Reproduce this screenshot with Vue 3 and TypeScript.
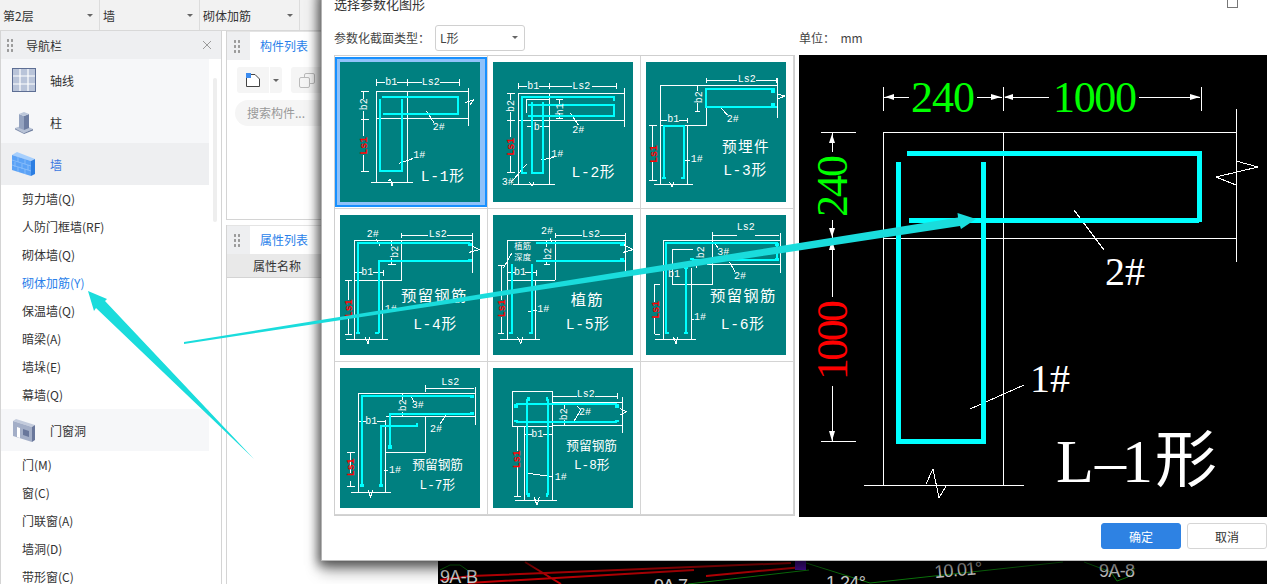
<template>
  <div class="page">
    <header class="topbar">
      <div v-for="name in floorSelects" :key="name" class="top-select">
        <span>{{ name }}</span>
        <i class="caret"></i>
      </div>
    </header>

    <div class="workspace">
      <aside class="nav-panel">
        <div class="panel-head">
          <i class="grip"></i>
          <span class="panel-title">导航栏</span>
          <svg class="close" viewBox="0 0 10 10" width="10" height="10">
            <path d="M1 1L9 9M9 1L1 9" stroke="#9a9a9a" stroke-width="1" fill="none" />
          </svg>
        </div>
        <div class="nav-body">
          <ul class="nav-list">
            <template v-for="group in navGroups" :key="group.name">
              <li class="nav-group" :class="{ 'is-open': group.name === '墙' }">
                <svg class="nav-icon" viewBox="0 0 24 24" width="24" height="24">
                  <template v-if="group.icon === 'grid'">
                    <rect x="0.5" y="0.5" width="23" height="23" fill="#b9c4d9" stroke="#5d6e94" />
                    <path d="M8 1V23M16 1V23M1 8H23M1 16H23" stroke="#fff" stroke-width="1.2" />
                  </template>
                  <template v-else-if="group.icon === 'column'">
                    <path d="M3 18L12 15L21 19L12 23Z" fill="#b7c2d6" />
                    <path d="M3 18L12 23V24L3 19.5Z" fill="#8795b2" />
                    <path d="M12 23L21 19V20.5L12 24Z" fill="#6f7e9f" />
                    <path d="M7 4L12 6V20L7 18Z" fill="#94a3c0" />
                    <path d="M12 6L17 4V18L12 20Z" fill="#6d7da1" />
                    <path d="M7 4L12 2L17 4L12 6Z" fill="#bcc7da" />
                  </template>
                  <template v-else-if="group.icon === 'wall'">
                    <path d="M0 3L5 0L23 7L19 9Z" fill="#a6cffd" />
                    <path d="M0 3L19 9V24L0 18Z" fill="#5ba2f6" />
                    <path d="M19 9L23 7V22L19 24Z" fill="#2c7ee2" />
                    <path d="M0 8L19 14M0 13L19 19M6 5V10M13 7V12M3 10V15M10 12V17M16 13V18M6 15V20M13 17V22" stroke="#8fc2fb" stroke-width="0.8" fill="none" />
                  </template>
                  <template v-else>
                    <path d="M1 3L4 1L23 7L20 9Z" fill="#c3cbdc" />
                    <path d="M1 3L20 9V24L1 18Z" fill="#a3aec7" />
                    <path d="M20 9L23 7V22L20 24Z" fill="#69779b" />
                    <path d="M5 9L8 10V20L5 19Z" fill="#fff" />
                    <path d="M11 11L17 13V19L11 17Z" fill="#69779b" />
                  </template>
                </svg>
                <span>{{ group.name }}</span>
              </li>
              <li
                v-for="item in group.items"
                :key="item"
                class="nav-item"
                :class="{ 'is-active': item === '砌体加筋(Y)' }"
              >
                {{ item }}
              </li>
            </template>
          </ul>
          <div class="nav-scroll"></div>
        </div>
      </aside>

      <section class="mid-panels">
        <div class="mid-panel list-panel">
          <div class="tab-head">
            <span class="tab-grip"><i class="grip"></i></span>
            <span class="tab">构件列表</span>
          </div>
          <div class="tool-row">
            <span class="tool-btn new-btn">
              <svg viewBox="0 0 16 16" width="16" height="16">
                <path d="M1.5 2.5H10L14.5 7V14.5H1.5Z" fill="#fff" stroke="#444" stroke-width="1" />
                <rect x="1" y="1" width="5" height="5" fill="#3c8cf0" />
              </svg>
            </span>
            <span class="tool-btn drop-btn"><i class="caret"></i></span>
            <span class="tool-btn copy-btn">
              <svg viewBox="0 0 16 16" width="16" height="16" fill="none" stroke="#bbb">
                <rect x="5.5" y="1.5" width="10" height="10" rx="1.5" />
                <rect x="0.5" y="5.5" width="10" height="10" rx="1.5" fill="#f5f5f5" />
              </svg>
            </span>
          </div>
          <div class="search-box">搜索构件...</div>
        </div>
        <div class="mid-panel prop-panel">
          <div class="tab-head">
            <span class="tab-grip"><i class="grip"></i></span>
            <span class="tab">属性列表</span>
          </div>
          <div class="prop-head">属性名称</div>
        </div>
      </section>

      <div class="scene">
        <svg class="scene-svg" viewBox="438 31 829 553" width="829" height="553">
          <rect x="438" y="31" width="829" height="553" fill="#000" />
          <path d="M440 580L471 576L791 563M468 583L694 570M706 576L803 567M525 562L561 584" stroke="#c40006" stroke-width="2" fill="none" />
          <path d="M688 584L809 570M803 562L870 583L1063 562M1084 562L1111 572L1117 581L1128 577L1135 568M440 570L450 565L460 565L470 572" stroke="#0d7a0d" stroke-width="1" fill="none" />
          <rect x="795" y="560" width="11" height="10" fill="#4b0f9e" />
          <text x="440" y="583" class="scene-text" textLength="38">9A-B</text>
          <text x="654" y="592" class="scene-text" textLength="34">9A-7</text>
          <text x="826" y="589" class="scene-text" textLength="40">1.24°</text>
          <text x="935" y="578" class="scene-text" textLength="48" transform="rotate(-5 935 578)">10.01°</text>
          <text x="1099" y="577" class="scene-text" textLength="36">9A-8</text>
        </svg>
      </div>
    </div>

    <div class="dialog">
      <div class="dialog-title">
        <span>选择参数化图形</span>
        <i class="max-icon"></i>
      </div>
      <div class="type-row">
        <div class="type-left">
          <label>参数化截面类型：</label>
          <div class="type-select">
            <span>L形</span>
            <i class="caret"></i>
          </div>
        </div>
        <span class="unit">单位： &nbsp;mm</span>
      </div>

      <div class="dialog-body">
        <div class="shape-grid">
          <div v-for="(shape, i) in shapes" :key="shape.name" class="shape-cell">
            <div class="shape-frame" :class="{ 'is-selected': i === 0 }">
              <svg class="shape" :viewBox="`${shape.ox} ${shape.oy} 420 420`" width="140" height="140">
                <rect :x="shape.ox" :y="shape.oy" width="420" height="420" fill="#008080" />
                <path :d="shape.white" class="thin" />
                <path :d="shape.cyan" class="bar" />
                <path v-if="shape.hooks" :d="shape.hooks" class="hook" />
                <text
                  v-for="label in shape.labels"
                  :key="label.t + label.x"
                  :x="label.x"
                  :y="label.y"
                  :font-size="label.s || 30"
                  :fill="label.red ? '#ff0000' : '#ffffff'"
                  :font-weight="label.red ? 700 : 400"
                  :letter-spacing="label.sp || 0"
                  :transform="label.rot ? `rotate(-90 ${label.x} ${label.y})` : undefined"
                  class="shape-text"
                >{{ label.t }}</text>
              </svg>
            </div>
          </div>
          <div class="shape-cell"></div>
        </div>

        <svg class="preview" viewBox="799 55 468 462" width="468" height="462">
          <rect x="799" y="55" width="468" height="462" fill="#000" />
          <path
            class="prev-thin"
            d="M883 132H1236M883 132V485M1003 132V485M883 238H1236M1236 109V262M864 485H1024
               M926 484L933 469L939 498L946 486M1236 161L1258 167L1216 177L1236 185
               M883 87V111M1003 87V111M1201 87V111M883 97H909M977 97H1002M1005 97H1049M1139 97H1200
               M821 132H856M821 441H856M832 132V152M832 220V297M832 386V441
               M1074 210L1104 250M970 409L1024 385"
          />
          <path
            d="M885 97L894 94V100ZM1001 97L991 94V100ZM1004 97L1013 94V100ZM1200 97L1190 94V100Z
               M832 134L829 143H835ZM832 237L829 228H835ZM832 240L829 250H835ZM832 441L829 431H835Z"
            fill="#fff"
          />
          <path class="prev-bar" d="M907 153H1199M1199 151V222M1199 220H909M898 162V441H983V162" />
          <text x="943" y="112" class="prev-num" fill="#00ff00" textLength="64">240</text>
          <text x="1095" y="112" class="prev-num" fill="#00ff00" textLength="84">1000</text>
          <text x="847" y="186" class="prev-num" fill="#00ff00" textLength="62" transform="rotate(-90 847 186)">240</text>
          <text x="847" y="340" class="prev-num" fill="#ff0000" textLength="80" transform="rotate(-90 847 340)">1000</text>
          <text x="1105" y="285" class="prev-tag">2#</text>
          <text x="1030" y="392" class="prev-tag">1#</text>
          <text y="482" class="prev-name" x="1056 1095 1122 1155">L–1形</text>
        </svg>
      </div>

      <div class="dialog-foot">
        <button type="button" class="btn primary">确定</button>
        <button type="button" class="btn">取消</button>
      </div>
    </div>

    <svg class="callouts" viewBox="0 0 1267 584" width="1267" height="584">
      <polygon points="88,291 107,299 105,301 254,459 96,308 94,311" fill="#1adcdc" />
      <polygon points="184,342 958,217.5 957.5,213 976,219 961,229 960,226 184,344" fill="#1adcdc" />
    </svg>
  </div>
</template>

<script setup lang="ts">
interface Label {
  t: string
  x: number
  y: number
  s?: number
  sp?: number
  red?: boolean
  rot?: boolean
}

interface Shape {
  name: string
  ox: number
  oy: number
  white: string
  cyan: string
  hooks?: string
  labels: Label[]
}

interface NavGroup {
  name: string
  icon: 'grid' | 'column' | 'wall' | 'door'
  items: string[]
}

const floorSelects = ['第2层', '墙', '砌体加筋']

const navGroups: NavGroup[] = [
  { name: '轴线', icon: 'grid', items: [] },
  { name: '柱', icon: 'column', items: [] },
  {
    name: '墙',
    icon: 'wall',
    items: ['剪力墙(Q)', '人防门框墙(RF)', '砌体墙(Q)', '砌体加筋(Y)', '保温墙(Q)', '暗梁(A)', '墙垛(E)', '幕墙(Q)']
  },
  { name: '门窗洞', icon: 'door', items: ['门(M)', '窗(C)', '门联窗(A)', '墙洞(D)', '带形窗(C)'] }
]

// coordinates are in 3x units, each viewBox starts at the thumbnail corner
const shapes: Shape[] = [
  {
    name: 'L-1',
    ox: 30,
    oy: 36,
    cyan: 'M157 141H385V191H160M216 148V363H150V148',
    white:
      'M139 97H165M200 97H275M330 97H388M139 87V107M232 87V107M388 87V107M139 124H415M139 124V397M232 124V397M139 206H415M415 115V228M124 397H248M175 392L182 388L186 408L190 395M100 124V148M100 182V258M100 316V363M93 124H118M93 207H118M93 363H118M289 183L312 218M208 340L250 325M404 158L430 150L420 165',
    labels: [
      { t: 'b1', x: 184, y: 97 },
      { t: 'Ls2', x: 302, y: 97 },
      { t: 'b2', x: 105, y: 163, rot: true },
      { t: 'Ls1', x: 105, y: 287, rot: true, red: true },
      { t: '2#', x: 326, y: 232 },
      { t: '1#', x: 268, y: 316 },
      { t: 'L-1形', x: 338, y: 382, s: 44, sp: 2 }
    ]
  },
  {
    name: 'L-2',
    ox: 489,
    oy: 36,
    cyan: 'M592 369H577V141H853V154M595 165H853V198H595M606 157V369H640V157',
    white:
      'M565 108H590M628 108H725M785 108H858M565 98V118M658 98V118M858 98V118M565 130H883M565 130V403M658 130V403M565 211H883M883 115V230M550 403H675M589 148H658M589 148V190M590 229H610M630 229H658M688 148V168M688 190V205M678 148H698M678 205H698M540 130V150M540 185V262M540 318V368M530 130H555M530 211H555M530 368H555M722 190L745 225M634 330L672 322M590 342L545 395M598 395L606 408L612 395',
    labels: [
      { t: 'b1', x: 610, y: 108 },
      { t: 'Ls2', x: 754, y: 108 },
      { t: 'b', x: 620, y: 231 },
      { t: 'h1', x: 691, y: 178, rot: true },
      { t: 'b2', x: 545, y: 168, rot: true },
      { t: 'Ls1', x: 545, y: 290, rot: true, red: true },
      { t: '2#', x: 745, y: 240 },
      { t: '1#', x: 682, y: 312 },
      { t: '3#', x: 533, y: 398 },
      { t: 'L-2形', x: 790, y: 368, s: 44, sp: 2 }
    ]
  },
  {
    name: 'L-3',
    ox: 18,
    oy: 36,
    cyan: 'M404 117H198V170H410M72 385V229H133V385',
    hooks: 'M400 117V128M400 170V159M72 380V388M128 380V388',
    white:
      'M62 105H412M62 105V405M62 225H200M200 115V225M143 225V403M412 85V205M200 90H292M348 90H410M200 85V100M410 85V100M62 210H80M118 210H143M143 203V220M38 225V292M38 335V392M28 225H52M28 392H52M42 403H160M172 105V122M172 160V185M165 185H180M240 170L262 195M133 330H150M410 132L435 138L410 148M88 395L96 412L102 395',
    labels: [
      { t: 'Ls2', x: 320, y: 88 },
      { t: 'b1', x: 100, y: 207 },
      { t: 'b2', x: 180, y: 142, rot: true },
      { t: 'Ls1', x: 42, y: 312, rot: true, red: true },
      { t: '2#', x: 278, y: 208 },
      { t: '1#', x: 170, y: 328 },
      { t: '预埋件', x: 318, y: 295, s: 44, sp: 4 },
      { t: 'L-3形', x: 315, y: 362, s: 44, sp: 2 }
    ]
  },
  {
    name: 'L-4',
    ox: 30,
    oy: 30,
    cyan: 'M85 385V114H420M146 385V169H425',
    hooks: 'M85 380V388M142 380V388M420 115V124M420 163V171',
    white:
      'M73 107H427M73 107V403M157 226V403M73 226H215M215 107V226M427 85V205M215 90H295M352 90H425M215 85V100M73 203H97M130 203H160M160 195V212M185 105V122M185 160V180M175 178H198M55 226V285M55 335V388M45 226H65M45 388H65M47 403H173M140 103L150 122M105 395L114 416L120 395M157 315H165M418 118L448 134L418 142',
    labels: [
      { t: 'Ls2', x: 323, y: 88 },
      { t: '2#', x: 128, y: 88 },
      { t: 'b2', x: 196, y: 140, rot: true },
      { t: 'b1', x: 112, y: 203 },
      { t: 'Ls1', x: 59, y: 310, rot: true, red: true },
      { t: '1#', x: 182, y: 313 },
      { t: '预留钢筋', x: 313, y: 276, s: 46, sp: 4 },
      { t: 'L-4形', x: 315, y: 360, s: 44, sp: 2 }
    ]
  },
  {
    name: 'L-5',
    ox: 489,
    oy: 30,
    cyan: 'M545 385V177M606 385V177M618 114H885M618 167H885',
    hooks: 'M543 380V388M604 380V388M875 115V124M875 160V169',
    white:
      'M532 107H887M532 107V403M615 226V403M532 226H675M675 107V226M887 85V205M675 90H755M810 90H885M675 85V100M532 203H555M586 203H618M618 195V212M513 180V285M513 335V385M503 180H523M503 385H523M510 403H630M545 145L520 190M595 320L620 316M650 105V125M650 165V180M643 178H660M660 100L668 118M562 395L572 416L578 395M880 118L908 134L880 142',
    labels: [
      { t: 'Ls2', x: 783, y: 88 },
      { t: '2#', x: 651, y: 80 },
      { t: '植筋', x: 578, y: 127, s: 25 },
      { t: '深度', x: 578, y: 158, s: 25 },
      { t: 'b2', x: 657, y: 146, rot: true },
      { t: 'b1', x: 570, y: 203 },
      { t: 'Ls1', x: 517, y: 310, rot: true, red: true },
      { t: '1#', x: 640, y: 313 },
      { t: '植筋', x: 772, y: 288, s: 46, sp: 4 },
      { t: 'L-5形', x: 773, y: 360, s: 44, sp: 2 }
    ]
  },
  {
    name: 'L-6',
    ox: 18,
    oy: 30,
    cyan: 'M78 385V114H412V165H155M137 385V187',
    hooks: 'M82 380V388M137 380V388M410 114V123M410 160V169M155 160V166M137 186V192',
    white:
      'M70 107H420M70 107V403M96 132H160M96 132V238M96 238H218M218 88V238M153 190V403M200 178H422M422 85V205M218 90H290M345 90H418M218 82V100M45 238H60M45 388H60M43 238V290M43 338V388M45 403H168M225 115L235 130M268 170L285 200M153 342H162M170 190V178M100 395L108 416L114 395',
    labels: [
      { t: 'Ls2', x: 317, y: 68 },
      { t: 'b2', x: 186, y: 142, rot: true },
      { t: '3#', x: 250, y: 142 },
      { t: 'b1', x: 102, y: 208 },
      { t: '2#', x: 300, y: 213 },
      { t: 'Ls1', x: 50, y: 314, rot: true, red: true },
      { t: '1#', x: 180, y: 338 },
      { t: '预留钢筋', x: 310, y: 276, s: 46, sp: 4 },
      { t: 'L-6形', x: 308, y: 360, s: 44, sp: 2 }
    ]
  },
  {
    name: 'L-7',
    ox: 30,
    oy: 24,
    cyan: 'M96 378V108H432M153 378V198H262V190M180 262V161H430',
    hooks: 'M96 372V382M153 372V382M180 256V266M426 104V113M426 155V165',
    white:
      'M85 100H437M85 100V397M167 180V397M167 170H437M167 277H287M287 170V277M437 80V195M287 85H433M287 75V95M85 185H108M140 185H167M60 277V340M60 362V380M50 277H75M50 380H75M62 397H183M348 165L330 192M242 108L252 125M162 331H175M218 100V120M218 155V172M114 390L122 412L128 390',
    labels: [
      { t: 'Ls2', x: 361, y: 67 },
      { t: 'b2', x: 220, y: 136, rot: true },
      { t: '3#', x: 263, y: 136 },
      { t: 'b1', x: 124, y: 185 },
      { t: '2#', x: 318, y: 207 },
      { t: '1#', x: 195, y: 331 },
      { t: 'Ls1', x: 66, y: 322, rot: true, red: true },
      { t: '预留钢筋', x: 323, y: 316, s: 38 },
      { t: 'L-7形', x: 322, y: 375, s: 38 }
    ]
  },
  {
    name: 'L-8',
    ox: 489,
    oy: 24,
    cyan: 'M592 405V118M655 405V118M558 133H862M558 187H862',
    hooks: 'M592 118H600M655 118H647M592 405H600M655 405H647M558 133V143M862 133V143M558 187V180M862 187V180',
    white:
      'M547 95H667V200H547ZM583 200V420M667 200V420M667 127H877M667 195H877M877 110V220M667 108H740M795 108H862M862 100V118M583 222H606M640 222H667M562 200V272M562 322V408M552 408H572M555 420H680M595 340L665 350M740 137L752 150L730 187M702 127V146M702 180V195M612 410L621 436L628 410M870 145L890 155L870 165',
    labels: [
      { t: 'Ls2', x: 767, y: 104 },
      { t: 'b2', x: 704, y: 163, rot: true },
      { t: '2#', x: 765, y: 158 },
      { t: 'b1', x: 622, y: 222 },
      { t: '1#', x: 692, y: 353 },
      { t: 'Ls1', x: 564, y: 298, rot: true, red: true },
      { t: '预留钢筋', x: 785, y: 258, s: 38 },
      { t: 'L-8形', x: 785, y: 316, s: 38 }
    ]
  }
]
</script>

<style>
html,
body {
  margin: 0;
  height: 100%;
  overflow: hidden;
  background: #fff;
}
</style>

<style scoped>
.page {
  position: relative;
  width: 1267px;
  height: 584px;
  overflow: hidden;
  background: #fff;
  font-family: "Noto Sans CJK SC", "Liberation Sans", sans-serif;
  font-size: 12px;
  color: #333;
}

.caret {
  display: inline-block;
  width: 0;
  height: 0;
  border-left: 3px solid transparent;
  border-right: 3px solid transparent;
  border-top: 3px solid #666;
}

.grip {
  display: block;
  width: 7px;
  height: 15px;
  background: radial-gradient(circle, #9a9a9a 1.1px, transparent 1.4px) 0 0 / 4px 5px;
}

/* top selects */
.topbar {
  display: flex;
  height: 30px;
  background: #f2f2f2;
  border-bottom: 1px solid #d8d8d8;
}

.top-select {
  display: flex;
  align-items: center;
  justify-content: space-between;
  box-sizing: border-box;
  width: 100px;
  padding: 0 6px 0 3px;
  border-right: 1px solid #dcdcdc;
}

.workspace {
  display: flex;
  height: 553px;
}

/* navigation */
.nav-panel {
  box-sizing: border-box;
  width: 222px;
  border-left: 1px solid #d4d4d4;
  border-right: 1px solid #d4d4d4;
}

.panel-head {
  display: flex;
  align-items: center;
  height: 28px;
  padding-left: 5px;
  background: #eeeff1;
}

.panel-title {
  margin-left: 13px;
}

.close {
  margin-left: auto;
  margin-right: 9px;
}

.nav-body {
  display: flex;
}

.nav-list {
  width: 208px;
  margin: 0;
  padding: 0;
  list-style: none;
}

.nav-group {
  display: flex;
  align-items: center;
  height: 42px;
  padding-left: 11px;
  background: #f6f7f9;
}

.nav-group.is-open {
  background: #eeeff1;
  color: #3b78e0;
}

.nav-icon {
  margin-right: 14px;
}

.nav-item {
  height: 28px;
  padding-left: 21px;
  line-height: 28px;
}

.nav-item.is-active {
  color: #2a7fea;
}

.nav-scroll {
  width: 4px;
  height: 144px;
  margin: 19px 0 0 4px;
  border-radius: 2px;
  background: #eeeeee;
}

/* middle panels */
.mid-panels {
  display: flex;
  flex-direction: column;
  gap: 5px;
  box-sizing: border-box;
  width: 212px;
  margin-left: 4px;
}

.mid-panel {
  border-left: 1px solid #d4d4d4;
}

.list-panel {
  height: 188px;
  border-bottom: 1px solid #d4d4d4;
}

.prop-panel {
  flex: 1;
}

.tab-head {
  display: flex;
  height: 28px;
  border-top: 1px solid #e4e4e4;
}

.tab-grip {
  display: flex;
  align-items: center;
  width: 23px;
  padding-left: 6px;
  box-sizing: border-box;
  background: #eeeff1;
}

.tab {
  width: 68px;
  line-height: 28px;
  text-align: center;
  color: #2a7fea;
}

.tool-row {
  display: flex;
  margin: 7px 0 0 10px;
}

.tool-btn {
  display: flex;
  align-items: center;
  justify-content: center;
  height: 26px;
  background: #f5f5f5;
}

.new-btn {
  width: 32px;
  border-radius: 3px 0 0 3px;
}

.drop-btn {
  width: 12px;
  margin-left: 1px;
  border-radius: 0 3px 3px 0;
}

.copy-btn {
  width: 32px;
  margin-left: 9px;
  border-radius: 3px;
}

.search-box {
  height: 26px;
  margin: 7px 0 0 8px;
  padding-left: 12px;
  border-radius: 13px;
  line-height: 26px;
  background: #f5f5f5;
  color: #999;
}

.prop-head {
  height: 23px;
  padding-left: 26px;
  line-height: 23px;
  background: #e9e9e9;
  border-bottom: 1px solid #d4d4d4;
}

/* cad view behind the dialog */
.scene {
  flex: 1;
}

.scene-svg {
  display: block;
}

.scene-text {
  font-family: "Liberation Sans", sans-serif;
  font-size: 18px;
  fill: #d0d0d0;
}

/* dialog */
.dialog {
  position: absolute;
  top: -14px;
  left: 321px;
  right: 0;
  box-sizing: border-box;
  padding-left: 12px;
  background: #fff;
  border-left: 1px solid #b4b4b4;
  border-bottom: 1px solid #bcbcbc;
  box-shadow: -3px 4px 10px rgba(0, 0, 0, 0.55), 0 10px 14px rgba(0, 0, 0, 0.35);
}

.dialog-title {
  display: flex;
  align-items: center;
  justify-content: space-between;
  height: 34px;
  font-size: 13px;
}

.max-icon {
  width: 9px;
  height: 8px;
  margin: 0 29px 0 0;
  border: 1px solid #777;
}

.type-row {
  display: flex;
  align-items: center;
  height: 35px;
  color: #444;
}

.type-left {
  display: flex;
  align-items: center;
  width: 465px;
}

.type-select {
  display: flex;
  align-items: center;
  justify-content: space-between;
  box-sizing: border-box;
  width: 90px;
  height: 26px;
  margin-left: 5px;
  padding: 0 6px 0 4px;
  border: 1px solid #d0d0d0;
  border-radius: 3px;
}

.dialog-body {
  display: flex;
  gap: 4px;
  height: 462px;
}

.shape-grid {
  display: grid;
  grid-template-columns: repeat(3, 153px);
  grid-auto-rows: 153px;
  align-self: flex-start;
  border: 1px solid #cfcfcf;
}

.shape-cell {
  box-sizing: border-box;
  padding-top: 1px;
  border-right: 1px solid #d4d4d4;
  border-bottom: 1px solid #d4d4d4;
}

.shape-frame {
  width: max-content;
  padding: 3px 5px 3px 3px;
  border: 2px solid transparent;
}

.shape-frame.is-selected {
  background: #8fc2fa;
  border-color: #1890ff;
}

.shape {
  display: block;
}

.thin {
  fill: none;
  stroke: #fff;
  stroke-width: 3;
  shape-rendering: crispEdges;
}

.bar {
  fill: none;
  stroke: #00ffff;
  stroke-width: 6;
  shape-rendering: crispEdges;
}

.hook {
  fill: none;
  stroke: #00ffff;
  stroke-width: 12;
  shape-rendering: crispEdges;
}

.shape-text {
  font-family: "Liberation Mono", "Noto Sans CJK SC", monospace;
  text-anchor: middle;
  dominant-baseline: central;
}

.preview {
  display: block;
  flex: none;
}

.prev-thin {
  fill: none;
  stroke: #fff;
  stroke-width: 1;
  shape-rendering: crispEdges;
}

.prev-bar {
  fill: none;
  stroke: #00ffff;
  stroke-width: 5;
  shape-rendering: crispEdges;
}

.prev-num {
  font-family: "Liberation Serif", serif;
  font-size: 44px;
  text-anchor: middle;
}

.prev-tag {
  font-family: "Liberation Serif", serif;
  font-size: 40px;
  fill: #fff;
}

.prev-name {
  font-family: "Liberation Serif", "Noto Sans CJK SC", serif;
  font-size: 62px;
  fill: #fff;
}

.dialog-foot {
  display: flex;
  justify-content: flex-end;
  gap: 6px;
  height: 43px;
  padding-top: 6px;
  box-sizing: border-box;
}

.btn {
  width: 80px;
  height: 26px;
  padding: 0;
  border: 1px solid #d5d5d5;
  border-radius: 3px;
  background: #fff;
  color: #333;
  font: inherit;
}

.btn.primary {
  background: #2e82e3;
  border-color: #2e82e3;
  color: #fff;
}

.callouts {
  position: absolute;
  top: 0;
  left: 0;
  pointer-events: none;
}
</style>
